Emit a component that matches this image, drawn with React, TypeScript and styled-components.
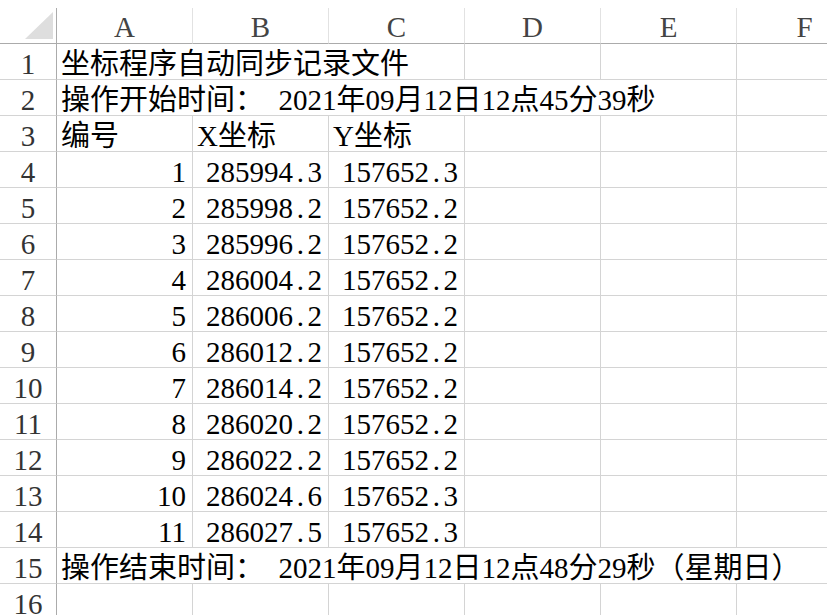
import React from 'react';
import styled, { createGlobalStyle } from 'styled-components';

const Global = createGlobalStyle`
  html, body { margin: 0; padding: 0; background: #fff; }
  body { width: 827px; height: 615px; overflow: hidden; }
`;

const Sheet = styled.div`
  display: grid;
  grid-template-columns: 57px repeat(6, 136px);
  grid-template-rows: 36px;
  grid-auto-rows: 36px;
  padding-top: 8px;
  width: max-content;
  font-family: "Liberation Serif", "Noto Sans CJK SC", serif;
  font-size: 29px;
  color: #000;
`;

const Corner = styled.div`
  box-sizing: border-box;
  border-right: 1px solid #ababab;
  border-bottom: 1px solid #ababab;
  display: flex;
  justify-content: flex-end;
  align-items: flex-end;
  padding: 0 3px 4px 0;
`;

const Triangle = styled.div`
  width: 28px;
  height: 27px;
  background: #dedede;
  clip-path: polygon(100% 0, 100% 100%, 0 100%);
`;

const ColHead = styled.div`
  box-sizing: border-box;
  border-right: 1px solid #e2e2e2;
  border-bottom: 1px solid #ababab;
  text-align: center;
  line-height: 38px;
  color: #444;
  white-space: nowrap;
  overflow: hidden;
`;

const RowHead = styled.div`
  box-sizing: border-box;
  border-right: 1px solid #ababab;
  border-bottom: 1px solid #d4d4d4;
  text-align: center;
  line-height: 40px;
  color: #333;
  white-space: nowrap;
`;

const Cell = styled.div<{ $align?: 'left' | 'right'; $span?: number }>`
  box-sizing: border-box;
  border-right: 1px solid #d4d4d4;
  border-bottom: 1px solid #d4d4d4;
  line-height: 40px;
  white-space: pre;
  overflow: visible;
  text-align: ${(p) => p.$align ?? 'left'};
  padding: ${(p) => (p.$align === 'right' ? '0 6px 0 0' : '0 0 0 4px')};
  grid-column: ${(p) => (p.$span ? `span ${p.$span}` : 'auto')};
`;

const Latin = styled.span`
  font-family: "Liberation Serif", serif;
`;

const Dot = styled.span`
  display: inline-block;
  width: 0.5em;
  text-align: center;
`;

const Num: React.FC<{ value: string }> = ({ value }) => {
  const [a, b] = value.split('.');
  if (b === undefined) return <>{a}</>;
  return (
    <>
      {a}
      <Dot>.</Dot>
      {b}
    </>
  );
};

/* Split mixed text so that Latin runs (digits, spaces) keep the serif face. */
const Mixed: React.FC<{ text: string }> = ({ text }) => {
  const parts = text.split(/([\x20-\x7e]+)/).filter((s) => s.length > 0);
  return (
    <>
      {parts.map((p, i) =>
        /^[\x20-\x7e]+$/.test(p) ? <Latin key={i}>{p}</Latin> : <React.Fragment key={i}>{p}</React.Fragment>
      )}
    </>
  );
};

const cols = ['A', 'B', 'C', 'D', 'E', 'F'];

const data: [string, string, string][] = [
  ['1', '285994.3', '157652.3'],
  ['2', '285998.2', '157652.2'],
  ['3', '285996.2', '157652.2'],
  ['4', '286004.2', '157652.2'],
  ['5', '286006.2', '157652.2'],
  ['6', '286012.2', '157652.2'],
  ['7', '286014.2', '157652.2'],
  ['8', '286020.2', '157652.2'],
  ['9', '286022.2', '157652.2'],
  ['10', '286024.6', '157652.3'],
  ['11', '286027.5', '157652.3'],
];

const Empty: React.FC<{ n: number }> = ({ n }) => (
  <>
    {Array.from({ length: n }).map((_, i) => (
      <Cell key={i} />
    ))}
  </>
);

export default function App() {
  return (
    <>
      <Global />
      <Sheet>
        <Corner>
          <Triangle />
        </Corner>
        {cols.map((c) => (
          <ColHead key={c}>{c}</ColHead>
        ))}

        <RowHead>1</RowHead>
        <Cell $span={3}>坐标程序自动同步记录文件</Cell>
        <Empty n={3} />

        <RowHead>2</RowHead>
        <Cell $span={5}>
          <Mixed text={'操作开始时间：  2021年09月12日12点45分39秒'} />
        </Cell>
        <Empty n={1} />

        <RowHead>3</RowHead>
        <Cell>编号</Cell>
        <Cell>
          <Mixed text="X坐标" />
        </Cell>
        <Cell>
          <Mixed text="Y坐标" />
        </Cell>
        <Empty n={3} />

        {data.map((r, i) => (
          <React.Fragment key={i}>
            <RowHead>{i + 4}</RowHead>
            <Cell $align="right">{r[0]}</Cell>
            <Cell $align="right">
              <Num value={r[1]} />
            </Cell>
            <Cell $align="right">
              <Num value={r[2]} />
            </Cell>
            <Empty n={3} />
          </React.Fragment>
        ))}

        <RowHead>15</RowHead>
        <Cell $span={6}>
          <Mixed text={'操作结束时间：  2021年09月12日12点48分29秒（星期日）'} />
        </Cell>

        <RowHead>16</RowHead>
        <Empty n={6} />
      </Sheet>
    </>
  );
}
